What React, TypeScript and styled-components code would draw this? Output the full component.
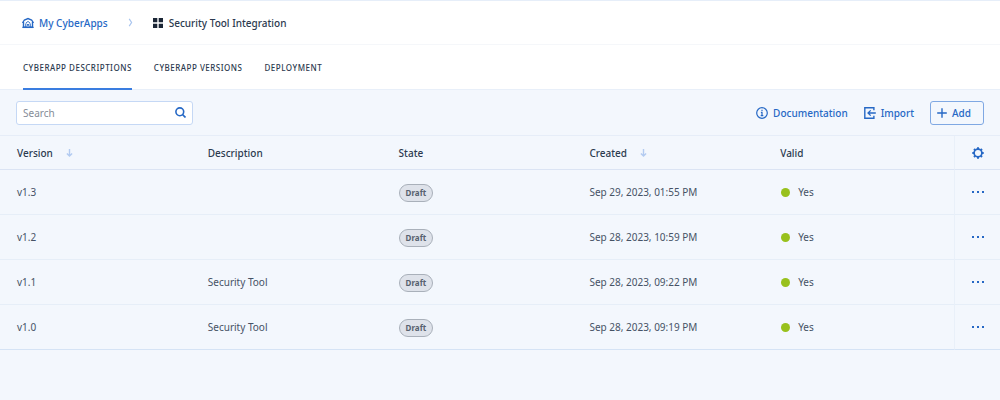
import React from "react";
import styled, { createGlobalStyle } from "styled-components";

const Global = createGlobalStyle`
  *, *::before, *::after { box-sizing: border-box; }
  html { background: #f3f7fd; }
  body {
    margin: 0;
    background: #f3f7fd;
    color: #2c3a4f;
    font-family: "Noto Sans", "Open Sans", sans-serif;
    font-size: 10px;
    line-height: 16px;
  }
  button, input { font: inherit; color: inherit; }
  svg { display: block; flex: none; }
`;

const Page = styled.main`
  width: 100%;
`;

const Breadcrumbs = styled.nav`
  display: flex;
  align-items: center;
  height: 44px;
  padding: 0 22px;
  background: #fff;
  border-top: 1px solid #e6eef9;
  font-weight: 500;
`;

const Crumb = styled.a`
  display: flex;
  align-items: center;
  gap: 5px;
  color: #2668c5;
  text-decoration: none;
`;

const CurrentCrumb = styled.span`
  display: flex;
  align-items: center;
  gap: 6px;
`;

const Separator = styled.span`
  display: flex;
  padding: 0 20px;
`;

const Tabs = styled.div`
  display: flex;
  gap: 22px;
  height: 46px;
  padding: 0 23px;
  background: #fff;
  border-top: 1px solid #f5f7fa;
  border-bottom: 1px solid #e8eff9;
`;

const Tab = styled.button<{ $active?: boolean }>`
  margin-bottom: -1px;
  padding: 2px 0 0;
  border: 0;
  border-bottom: 2px solid ${(p) => (p.$active ? "#3a7de0" : "transparent")};
  background: none;
  font-size: 8px;
  font-weight: 500;
  letter-spacing: 0.5px;
  text-transform: uppercase;
  cursor: pointer;
`;

const Toolbar = styled.div`
  display: flex;
  align-items: center;
  justify-content: space-between;
  height: 45px;
  padding: 0 16px;
`;

const SearchBox = styled.label`
  display: flex;
  align-items: center;
  width: 177px;
  height: 24px;
  padding: 0 6px;
  border: 1px solid #c5d8f5;
  border-radius: 3px;
  background: #fff;
`;

const SearchInput = styled.input`
  flex: 1;
  min-width: 0;
  padding: 0;
  border: 0;
  outline: 0;
  background: none;
  &::placeholder { color: #858c97; opacity: 1; }
`;

const Actions = styled.div`
  display: flex;
  align-items: center;
  gap: 16px;
`;

const Action = styled.button<{ $outlined?: boolean }>`
  display: flex;
  align-items: center;
  gap: 5px;
  height: 24px;
  padding: ${(p) => (p.$outlined ? "0 12px 0 6px" : "0")};
  border: ${(p) => (p.$outlined ? "1px solid #7fa8e3" : "0")};
  border-radius: 3px;
  background: none;
  color: #2668c5;
  font-weight: 500;
  cursor: pointer;
`;

const Table = styled.table`
  width: 100%;
  table-layout: fixed;
  border-collapse: separate;
  border-spacing: 0;
  border-top: 1px solid #e6edf8;
`;

const HeadCell = styled.th`
  height: 34px;
  padding: 0 17px;
  border-bottom: 1px solid #dbe4f4;
  text-align: left;
  font-weight: 500;
`;

const HeadLabel = styled.span`
  display: flex;
  align-items: center;
  gap: 13px;
`;

const Row = styled.tr`
  &:last-child > td { border-bottom-color: #d5e3f5; }
`;

const Cell = styled.td`
  height: 45px;
  padding: 0 17px;
  border-bottom: 1px solid #e6eef8;
  color: #465265;
`;

const ToolHead = styled(HeadCell)`
  width: 46px;
  padding: 0;
  border-left: 1px solid #e9f0f9;
`;

const ToolCell = styled(Cell)`
  padding: 0;
  border-left: 1px solid #e9f0f9;
`;

const IconButton = styled.button`
  display: flex;
  align-items: center;
  justify-content: center;
  width: 100%;
  height: 24px;
  padding: 0;
  border: 0;
  background: none;
  color: #2668c5;
  cursor: pointer;
`;

const Badge = styled.span`
  display: block;
  width: fit-content;
  height: 18px;
  margin-top: 2px;
  padding: 0 6px;
  border: 1px solid #a9b0ba;
  border-radius: 9px;
  background: #dee2ea;
  color: #56606e;
  font-size: 8px;
  font-weight: 700;
  line-height: 16px;
`;

const Validity = styled.span`
  display: flex;
  align-items: center;
  gap: 8px;
  &::before {
    content: "";
    width: 9px;
    height: 9px;
    margin-left: 1px;
    border-radius: 50%;
    background: #98c11d;
  }
`;

const HomeIcon = () => (
  <svg width="12" height="12" viewBox="0 0 12 12" fill="none" stroke="currentColor" aria-hidden="true">
    <path d="M.5 6 2.400 3 6 1.600l3.600 1.400 1.900 3M1.500 5v5.300h9V5" strokeWidth="1.400" />
    <path d="M.4 10.400h11.200" strokeWidth="1.300" />
    <path d="M3.700 10V7M8.300 10V7M3.500 6.400 6 4.400l2.500 2M4.500 9l3-2.200M4.500 6.800l3 2.200" strokeWidth=".9" />
  </svg>
);

const ChevronIcon = () => (
  <svg width="5" height="9" viewBox="0 0 5 9" fill="none" stroke="#a9c5ef" aria-hidden="true">
    <path d="M1.200 .8 3.600 4.500 1.200 8.200" strokeWidth="1.200" />
  </svg>
);

const GridIcon = () => (
  <svg width="10" height="10" viewBox="0 0 10 10" fill="#1b2636" aria-hidden="true">
    <path d="M0 0h4.300v4.300H0zM5.700 0H10v4.300H5.700zM0 5.700h4.300V10H0zM5.700 5.700H10V10H5.700z" />
  </svg>
);

const SearchIcon = () => (
  <svg width="11" height="11" viewBox="0 0 11 11" fill="none" stroke="#2668c5" aria-hidden="true">
    <circle cx="4.800" cy="4.800" r="3.900" strokeWidth="1.600" />
    <path d="m7.500 7.500 3 3" strokeWidth="1.700" />
  </svg>
);

const InfoIcon = () => (
  <svg width="12" height="12" viewBox="0 0 12 12" fill="none" stroke="currentColor" aria-hidden="true">
    <circle cx="6" cy="6" r="5.300" strokeWidth="1.200" />
    <path d="M6 2.700v1.400M4.900 5.300H6v3M4.700 8.600h2.600" strokeWidth="1.200" />
  </svg>
);

const ImportIcon = () => (
  <svg width="12" height="12" viewBox="0 0 12 12" fill="none" stroke="currentColor" aria-hidden="true">
    <path d="M9.900 3.200V.8H.8v10.400h9.100V8.800" strokeWidth="1.400" />
    <path d="M11.800 6H4.200M6.700 3.400 4 6l2.700 2.600" strokeWidth="1.300" />
  </svg>
);

const PlusIcon = () => (
  <svg width="10" height="10" viewBox="0 0 10 10" fill="none" stroke="currentColor" aria-hidden="true">
    <path d="M5 .2v9.600M.2 5h9.600" strokeWidth="1.400" />
  </svg>
);

const SortIcon = () => (
  <svg width="7" height="9" viewBox="0 0 7 9" fill="none" stroke="#b3cbf1" aria-hidden="true">
    <path d="M3.500 1v7M.9 5.400l2.600 2.600 2.600-2.600" strokeWidth="1.400" />
  </svg>
);

const GearIcon = () => (
  <svg width="12" height="12" viewBox="0 0 12 12" fill="none" stroke="currentColor" aria-hidden="true">
    <circle cx="6" cy="6" r="3.900" strokeWidth="1.700" />
    <path
      d="M6 .3v1.700M6 10v1.700M.3 6H2M10 6h1.700M2 2l1.200 1.200M8.800 8.800 10 10M10 2 8.800 3.200M3.200 8.800 2 10"
      strokeWidth="2"
    />
  </svg>
);

const DotsIcon = () => (
  <svg width="12" height="2" viewBox="0 0 12 2" fill="currentColor" aria-hidden="true">
    <path d="M0 0h2v2H0zM5 0h2v2H5zM10 0h2v2h-2z" />
  </svg>
);

const columns = [
  { name: "Version", sortable: true },
  { name: "Description" },
  { name: "State" },
  { name: "Created", sortable: true },
  { name: "Valid" },
];

const versions = [
  { version: "v1.3", description: "", created: "Sep 29, 2023, 01:55 PM" },
  { version: "v1.2", description: "", created: "Sep 28, 2023, 10:59 PM" },
  { version: "v1.1", description: "Security Tool", created: "Sep 28, 2023, 09:22 PM" },
  { version: "v1.0", description: "Security Tool", created: "Sep 28, 2023, 09:19 PM" },
];

export default function App() {
  return (
    <Page>
      <Global />
      <Breadcrumbs aria-label="Breadcrumb">
        <Crumb href="#apps">
          <HomeIcon />
          My CyberApps
        </Crumb>
        <Separator>
          <ChevronIcon />
        </Separator>
        <CurrentCrumb aria-current="page">
          <GridIcon />
          Security Tool Integration
        </CurrentCrumb>
      </Breadcrumbs>
      <Tabs role="tablist">
        <Tab role="tab" aria-selected="true" $active>CyberApp Descriptions</Tab>
        <Tab role="tab" aria-selected="false">CyberApp Versions</Tab>
        <Tab role="tab" aria-selected="false">Deployment</Tab>
      </Tabs>
      <Toolbar>
        <SearchBox>
          <SearchInput type="text" placeholder="Search" aria-label="Search" />
          <SearchIcon />
        </SearchBox>
        <Actions>
          <Action type="button">
            <InfoIcon />
            Documentation
          </Action>
          <Action type="button">
            <ImportIcon />
            Import
          </Action>
          <Action type="button" $outlined>
            <PlusIcon />
            Add
          </Action>
        </Actions>
      </Toolbar>
      <Table>
        <thead>
          <tr>
            {columns.map((column) => (
              <HeadCell key={column.name} scope="col">
                <HeadLabel>
                  {column.name}
                  {column.sortable && <SortIcon />}
                </HeadLabel>
              </HeadCell>
            ))}
            <ToolHead scope="col">
              <IconButton type="button" aria-label="Table settings">
                <GearIcon />
              </IconButton>
            </ToolHead>
          </tr>
        </thead>
        <tbody>
          {versions.map((item) => (
            <Row key={item.version}>
              <Cell>{item.version}</Cell>
              <Cell>{item.description}</Cell>
              <Cell><Badge>Draft</Badge></Cell>
              <Cell>{item.created}</Cell>
              <Cell><Validity>Yes</Validity></Cell>
              <ToolCell>
                <IconButton type="button" aria-label={`Actions for ${item.version}`}>
                  <DotsIcon />
                </IconButton>
              </ToolCell>
            </Row>
          ))}
        </tbody>
      </Table>
    </Page>
  );
}
